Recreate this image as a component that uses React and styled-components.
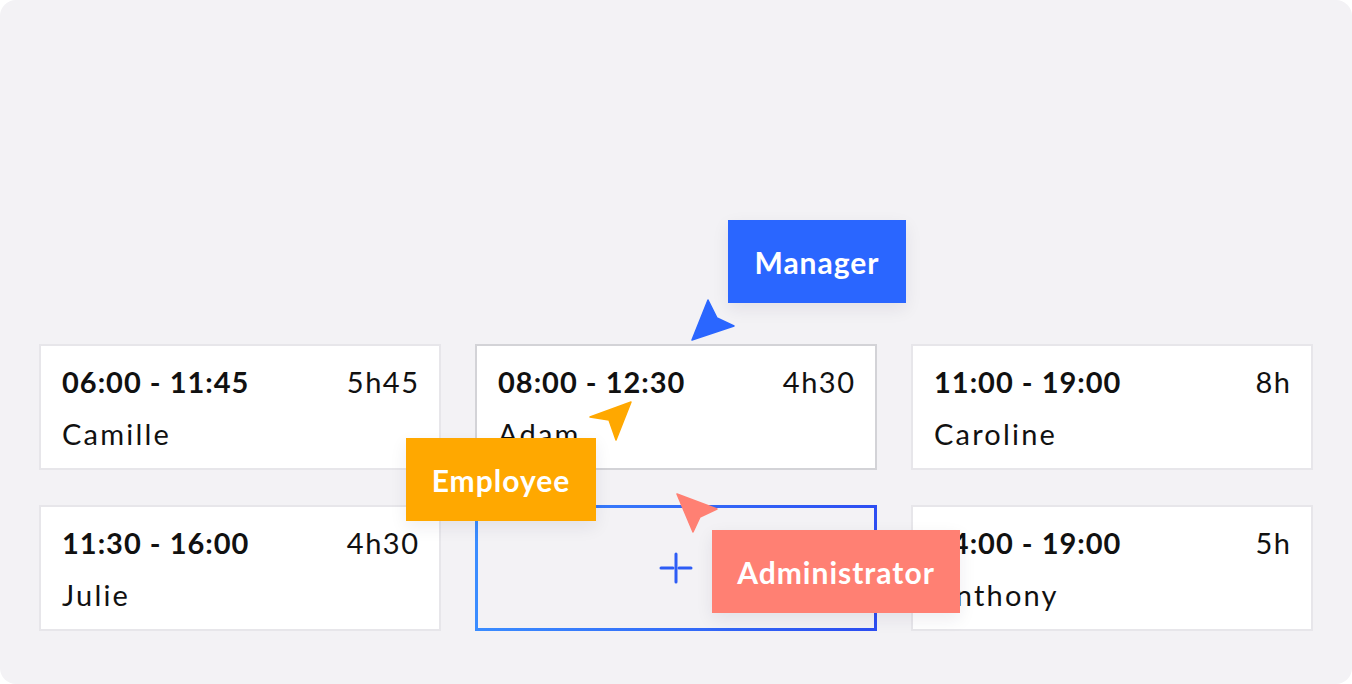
import React from 'react';
import styled, { createGlobalStyle } from 'styled-components';

const GlobalStyle = createGlobalStyle`
  * { box-sizing: border-box; }
  html, body { margin: 0; padding: 0; background: #ffffff; }
  body { font-family: 'Lato', 'Noto Sans', sans-serif; color: #111111; }
`;

const Panel = styled.div`
  position: relative;
  width: 1352px;
  height: 684px;
  border-radius: 16px;
  background: #f3f2f5;
  overflow: hidden;

  display: flex;
  flex-direction: column;
  justify-content: flex-end;
  padding: 0 39px 53px;
`;

const ShiftGrid = styled.div`
  display: grid;
  grid-template-columns: repeat(3, 402px);
  grid-auto-rows: 126px;
  column-gap: 34px;
  row-gap: 35px;
`;

const Card = styled.div`
  background: #ffffff;
  border: 2px solid ${p => (p.$active ? '#d3d3d7' : '#e7e6ea')};
  padding: 18px 21px 0 21px;
  display: flex;
  flex-direction: column;
`;

const TopRow = styled.div`
  display: flex;
  justify-content: space-between;
  align-items: baseline;
  line-height: 36px;
`;

const Time = styled.span`
  font-size: 29px;
  font-weight: 700;
  letter-spacing: 1px;
`;

const Hours = styled.span`
  font-size: 29px;
  font-weight: 400;
  letter-spacing: 1.5px;
  margin-right: -1.5px;
`;

const Name = styled.div`
  margin-top: 16px;
  font-size: 29px;
  line-height: 36px;
  font-weight: 400;
  letter-spacing: 2.2px;
`;

const EmptySlot = styled.div`
  border: 3px solid;
  border-image: linear-gradient(90deg, #3a8cff, #2d4ef2) 1;
  display: flex;
  align-items: center;
  justify-content: center;
`;

const RoleTag = styled.div`
  position: absolute;
  left: ${p => p.$x}px;
  top: ${p => p.$y}px;
  width: ${p => p.$w}px;
  height: 83px;
  background: ${p => p.$bg};
  color: #ffffff;
  font-size: 30px;
  font-weight: 700;
  letter-spacing: 1px;
  display: flex;
  align-items: center;
  justify-content: center;
  box-shadow: 0 6px 16px rgba(40, 30, 60, 0.08);
  z-index: 3;
`;

const Pointer = styled.svg`
  position: absolute;
  left: ${p => p.$x}px;
  top: ${p => p.$y}px;
  z-index: 4;
  overflow: visible;
`;

const shifts = [
  { time: '06:00 - 11:45', hours: '5h45', name: 'Camille' },
  { time: '08:00 - 12:30', hours: '4h30', name: 'Adam', active: true },
  { time: '11:00 - 19:00', hours: '8h', name: 'Caroline' },
  { time: '11:30 - 16:00', hours: '4h30', name: 'Julie' },
  null,
  { time: '14:00 - 19:00', hours: '5h', name: 'Anthony' },
];

// points are absolute page coords, the svg is shifted to box origin
const Cursor = ({ x, y, points, color }) => (
  <Pointer $x={x} $y={y} width="50" height="50" viewBox={`${x} ${y} 50 50`}>
    <polygon points={points} fill={color} stroke={color} strokeWidth="1.5" strokeLinejoin="round" />
  </Pointer>
);

const PlusIcon = () => (
  <svg width="34" height="32" viewBox="0 0 34 32">
    <g stroke="#2d5cf5" strokeWidth="3" strokeLinecap="round">
      <line x1="17" y1="2" x2="17" y2="30" />
      <line x1="2" y1="16" x2="14" y2="16" />
      <line x1="20" y1="16" x2="32" y2="16" />
    </g>
  </svg>
);

const App = () => {
  return (
    <>
      <GlobalStyle />
      <Panel>
        <ShiftGrid>
          {shifts.map((s, i) =>
            s ? (
              <Card key={i} $active={s.active}>
                <TopRow>
                  <Time>{s.time}</Time>
                  <Hours>{s.hours}</Hours>
                </TopRow>
                <Name>{s.name}</Name>
              </Card>
            ) : (
              <EmptySlot key={i}>
                <PlusIcon />
              </EmptySlot>
            )
          )}
        </ShiftGrid>

        <RoleTag $x={728} $y={220} $w={178} $bg="#2a66ff">Manager</RoleTag>
        <RoleTag $x={406} $y={438} $w={190} $bg="#ffa800">Employee</RoleTag>
        <RoleTag $x={712} $y={530} $w={248} $bg="#ff8073">Administrator</RoleTag>

        <Cursor x={688} y={296} color="#2a66ff" points="708,300 717,318 734,326 692,340" />
        <Cursor x={586} y={398} color="#ffa800" points="631,402 616,440 609,420 590,417" />
        <Cursor x={673} y={490} color="#ff8073" points="677,494 717,509 700,517 693,532" />
      </Panel>
    </>
  );
};

export default App;
